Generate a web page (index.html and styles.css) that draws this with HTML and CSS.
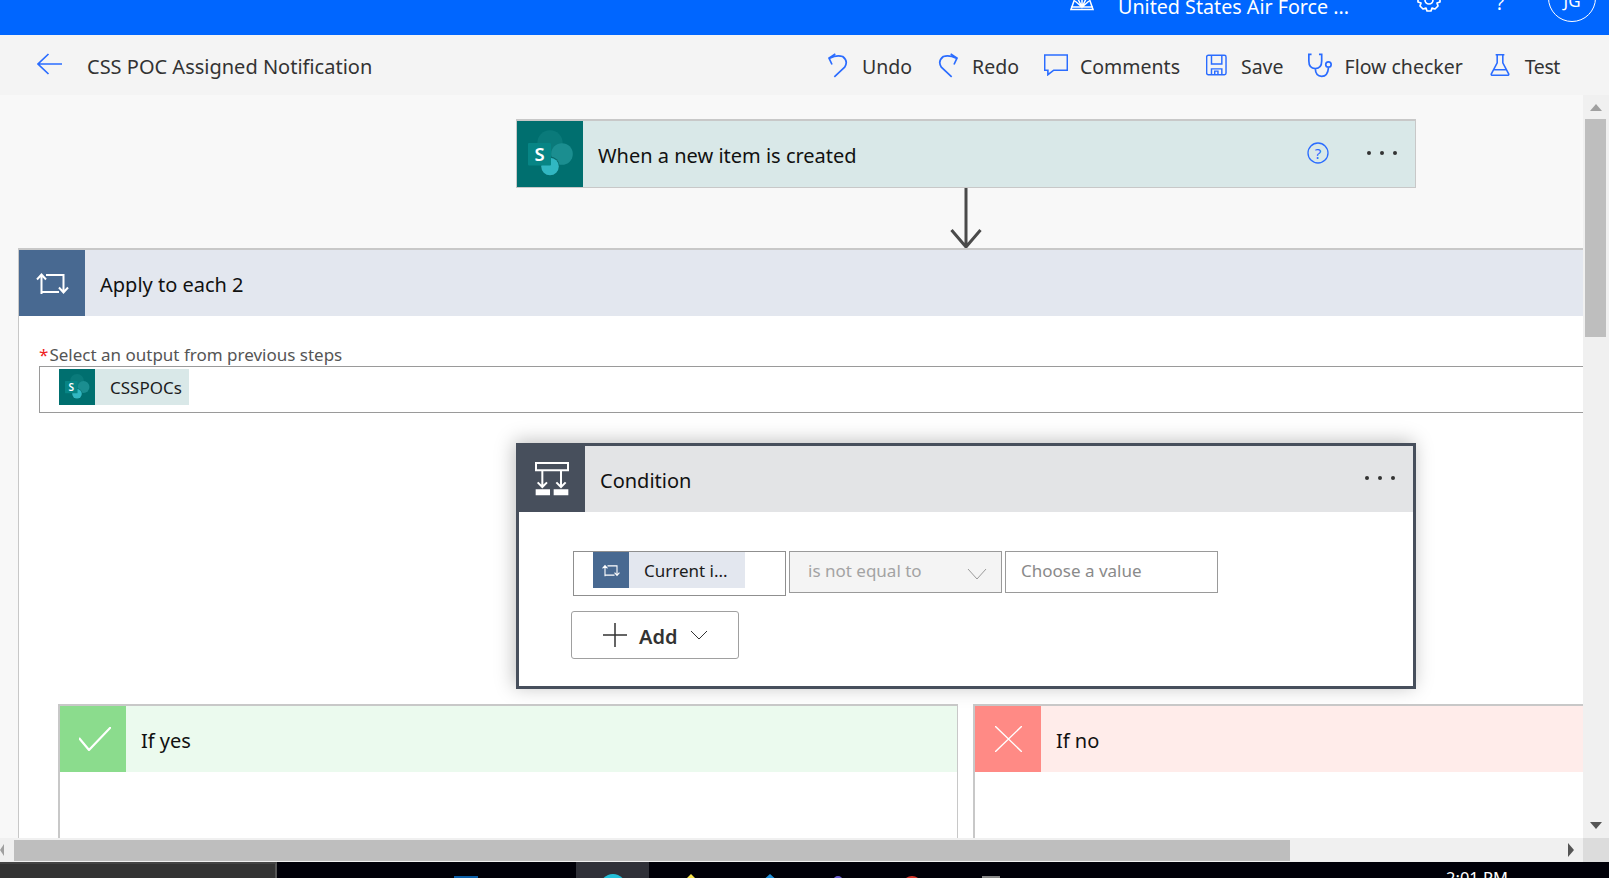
FILE: index.html
```html
<!DOCTYPE html>
<html lang="en">
<head>
<meta charset="utf-8">
<title>CSS POC Assigned Notification</title>
<link rel="stylesheet" href="styles.css">
</head>
<body>
<svg class="defs" width="0" height="0" aria-hidden="true">
  <symbol id="sp" viewBox="0 0 66 66">
    <circle cx="33" cy="22" r="12.700" fill="#0a7a7a"/>
    <circle cx="45" cy="33" r="10.800" fill="#1b8e90"/>
    <circle cx="33" cy="45" r="9.500" fill="#0a6a6a"/>
    <circle cx="33" cy="45.500" r="8.800" fill="#31b7c2"/>
    <rect x="11" y="22" width="23" height="22.500" rx="1" fill="#078585"/>
    <text x="22.500" y="39.700" text-anchor="middle" class="sp-s">S</text>
  </symbol>
  <symbol id="loop" viewBox="0 0 33 21">
    <path d="M5.500 21V1.500M1 6.500l4.500-5 4.500 5M10 2h17.500v17.500M23 14.500l4.500 5 4.500-5M5.500 19H23" fill="none" stroke="#fff" stroke-width="2"/>
  </symbol>
</svg>

<header class="topbar">
  <svg class="env-icon" viewBox="0 0 24 22" width="24" height="22"><path d="M5 9L1 20.500h22L19 9M1 18h22M5 12l7 6 7-6M12 10v8M8 10l4 8 4-8" fill="none" stroke="#fff" stroke-width="1.500"/></svg>
  <span class="env-name">United States Air Force ...</span>
  <svg class="gear" viewBox="0 0 24 24" width="24" height="24"><path d="M10 1h4l1 3 3-1 3 3-1 3 3 1v4l-3 1 1 3-3 3-3-1-1 3h-4l-1-3-3 1-3-3 1-3-3-1v-4l3-1-1-3 3-3 3 1z" fill="none" stroke="#fff" stroke-width="1.700" stroke-linejoin="round"/><circle cx="12" cy="12" r="4" fill="none" stroke="#fff" stroke-width="1.700"/></svg>
  <span class="help">?</span>
  <span class="avatar">JG</span>
</header>

<nav class="toolbar">
  <svg class="back" viewBox="0 0 25 22" width="25" height="22"><path d="M11.500 1L1 11l10.500 10M1 11h24" fill="none" stroke="#2a6cff" stroke-width="1.700"/></svg>
  <span class="flow-title">CSS POC Assigned Notification</span>
  <div class="actions">
    <button class="action undo"><svg viewBox="28 36 60 74" width="20" height="25"><path d="M47 107L78 78Q90 60 72 46 55 40 33 51M50 38L31 51l9 19" fill="none" stroke="#2a6cff" stroke-width="5"/></svg>Undo</button>
    <button class="action redo"><svg class="flip" viewBox="28 36 60 74" width="20" height="25"><path d="M47 107L78 78Q90 60 72 46 55 40 33 51M50 38L31 51l9 19" fill="none" stroke="#2a6cff" stroke-width="5"/></svg>Redo</button>
    <button class="action comments"><svg viewBox="678 43 74 66" width="24" height="22"><path d="M680 45h70v47h-42l-18 14V92h-10z" fill="none" stroke="#2a6cff" stroke-width="5"/></svg>Comments</button>
    <button class="action save"><svg viewBox="23 42 65 66" width="21" height="22"><path d="M30 45h50q5 0 5 5v50q0 5-5 5H30q-5 0-5-5V50q0-5 5-5zM40 45v27h32V45M40 105V87h32v18M50 105V94h10v11" fill="none" stroke="#2a6cff" stroke-width="4.500"/></svg>Save</button>
    <button class="action checker"><svg viewBox="325 38 76 74" width="26" height="25"><path d="M338 42h-8v20q0 22 19 22t19-22V42h-8M349 84q1 23 19 23t20-25" fill="none" stroke="#2a6cff" stroke-width="5"/><circle cx="388" cy="72" r="8" fill="none" stroke="#2a6cff" stroke-width="5"/></svg>Flow checker</button>
    <button class="action test"><svg viewBox="870 38 64 74" width="20" height="24"><path d="M888 42h28M893 42v26l-19 36q-1 4 4 4h48q5 0 4-4l-19-36V42M882 90h40" fill="none" stroke="#2a6cff" stroke-width="5"/></svg>Test</button>
  </div>
</nav>

<div class="workspace">
  <main class="canvas">
    <section class="card trigger">
      <div class="card-head trigger-head">
        <div class="card-icon sp-bg"><svg width="66" height="66"><use href="#sp"/></svg></div>
        <span class="card-title">When a new item is created</span>
        <svg class="info" viewBox="0 0 22 22" width="22" height="22"><circle cx="11" cy="11" r="10" fill="none" stroke="#2a6cff" stroke-width="1.300"/><text x="11" y="16.500" text-anchor="middle" class="info-q">?</text></svg>
        <span class="dots"><i></i><i></i><i></i></span>
      </div>
    </section>

    <div class="connector">
      <svg viewBox="0 0 32 60" width="32" height="60"><path d="M16 0v58M1.500 42L16 59 30.500 42" fill="none" stroke="#4a4a4a" stroke-width="3"/></svg>
    </div>

    <section class="loop">
      <div class="card-head loop-head">
        <div class="card-icon loop-bg"><svg width="33" height="21"><use href="#loop"/></svg></div>
        <span class="card-title">Apply to each 2</span>
      </div>
      <div class="loop-body">
        <label class="field-label"><span class="req">*</span>Select an output from previous steps</label>
        <div class="output-input">
          <span class="token sp-token"><span class="token-icon sp-bg"><svg width="36" height="36"><use href="#sp"/></svg></span><span class="token-text">CSSPOCs</span></span>
        </div>

        <section class="card condition">
          <div class="card-head condition-head">
            <div class="card-icon cond-bg"><svg viewBox="60 66 102 102" width="34" height="34"><path d="M63 69h96v22H63zM82 91v50M68 127l14 14 14-14M138 91v50M124 127l14 14 14-14" fill="none" stroke="#fff" stroke-width="6"/><path d="M62 148h43v18H62zM116 148h44v18h-44z" fill="#fff"/></svg></div>
            <span class="card-title">Condition</span>
            <span class="dots"><i></i><i></i><i></i></span>
          </div>
          <div class="condition-body">
            <div class="cond-row">
              <div class="cond-field cond-left">
                <span class="token loop-token"><span class="token-icon loop-bg"><svg width="18" height="13"><use href="#loop"/></svg></span><span class="token-text">Current i...</span></span>
              </div>
              <div class="cond-field cond-op"><span>is not equal to</span><svg viewBox="0 0 20 12" width="20" height="12"><path d="M1 1l9 10 9-10" fill="none" stroke="#9a9a9a" stroke-width="1"/></svg></div>
              <div class="cond-field cond-val">Choose a value</div>
            </div>
            <button class="add-btn"><svg viewBox="0 0 24 24" width="24" height="24"><path d="M12 0v24M0 12h24" stroke="#333" stroke-width="1.500"/></svg><span>Add</span><svg viewBox="0 0 18 10" width="18" height="10"><path d="M1 1l8 8 8-8" fill="none" stroke="#333" stroke-width="1"/></svg></button>
          </div>
        </section>

        <div class="branches">
          <section class="branch">
            <div class="card-head yes-head">
              <div class="card-icon yes-bg"><svg class="check" viewBox="0 0 32 24" width="32" height="24"><path d="M0 11l10 12L32 0" fill="none" stroke="#fff" stroke-width="2.200"/></svg></div>
              <span class="card-title">If yes</span>
            </div>
          </section>
          <section class="branch">
            <div class="card-head no-head">
              <div class="card-icon no-bg"><svg viewBox="0 0 27 26" width="27" height="26"><path d="M0 0l27 26M27 0L0 26" fill="none" stroke="#fff" stroke-width="1.400"/></svg></div>
              <span class="card-title">If no</span>
            </div>
          </section>
        </div>
      </div>
    </section>
  </main>
  <aside class="vscroll">
    <i class="arrow up"></i>
    <div class="vthumb"></div>
    <i class="arrow down"></i>
  </aside>
</div>

<div class="hscroll">
  <i class="arrow left"></i>
  <div class="hthumb"></div>
  <i class="arrow right"></i>
  <div class="corner"></div>
</div>

<footer class="taskbar">
  <div class="task-search"></div>
  <div class="tray">
    <i class="ti-blue"></i>
    <span class="ti-active"><i class="ti-edge"></i></span>
    <i class="ti-yellow"></i>
    <i class="ti-sky"></i>
    <i class="ti-purple"></i>
    <i class="ti-red"></i>
    <i class="ti-flag"></i>
  </div>
  <span class="clock">2:01 PM</span>
</footer>
</body>
</html>
```

FILE: styles.css
```css
* { box-sizing: border-box; }
html, body { margin: 0; padding: 0; }
body {
  width: 1609px;
  height: 878px;
  overflow: hidden;
  display: flex;
  flex-direction: column;
  font-family: "Noto Sans", "Open Sans", sans-serif;
  color: #1c1c1c;
  background: #f8f8f8;
}
.defs { position: absolute; }
.sp-s { font: 600 18.500px "Noto Sans", sans-serif; fill: #fff; }
.info-q { font: 400 15px "Noto Sans", sans-serif; fill: #2a6cff; }

/* top bar */
.topbar {
  flex: 0 0 35px;
  background: #0066ff;
  color: #fff;
  overflow: hidden;
  display: flex;
  align-items: flex-start;
  padding-left: 1070px;
}
.env-icon { margin-top: -11px; flex: none; }
.env-name { margin-left: 24px; width: 270px; font-size: 19.700px; line-height: 26px; margin-top: -6px; white-space: nowrap; }
.gear { margin-left: 29px; margin-top: -12px; flex: none; }
.help { margin-left: 55px; font-size: 19px; line-height: 24px; margin-top: -9px; width: 20px; }
.avatar {
  margin-left: 32px;
  margin-top: -26px;
  width: 48px;
  height: 48px;
  flex: none;
  border: 1px solid #fff;
  border-radius: 50%;
  display: flex;
  align-items: center;
  justify-content: center;
  font-size: 17px;
  padding-top: 4px;
}

/* toolbar */
.toolbar {
  flex: 0 0 60px;
  background: #f4f4f4;
  display: flex;
  align-items: center;
  padding-left: 37px;
  color: #333;
}
.back { flex: none; margin-top: -2px; }
.flow-title { margin-left: 25px; font-size: 20px; white-space: nowrap; padding-top: 2px; }
.actions { display: flex; margin-left: auto; align-items: center; padding-right: 49px; gap: 26px; }
.action {
  display: flex;
  align-items: center;
  gap: 14px;
  background: none;
  border: 0;
  padding: 4px 0 0;
  font: inherit;
  font-size: 19.500px;
  line-height: 30px;
  color: #333;
  white-space: nowrap;
}
.action svg { margin-top: -4px; }
.comments { gap: 12px; margin-left: -1px; }
.save { gap: 14px; }
.checker { gap: 12px; margin-left: -3px; }
.test { letter-spacing: -.4px; gap: 15px; margin-left: 1px; }
.flip { transform: scaleX(-1); }

/* workspace */
.workspace { flex: 0 0 743px; display: flex; min-height: 0; }
.canvas { flex: 1; min-width: 0; overflow: hidden; background: #f8f8f8; padding-top: 24px; }
.card-head { display: flex; align-items: center; height: 66px; }
.card-icon { width: 66px; height: 66px; flex: none; display: flex; align-items: center; justify-content: center; }
.card-title { margin-left: 15px; font-size: 20px; color: #111; white-space: nowrap; padding-top: 2px; }
.sp-bg { background: #006f6f; }
.loop-bg { background: #486991; }
.cond-bg { background: #474f5c; }
.yes-bg { background: #8bdc8d; }
.no-bg { background: #ff8a85; }
.check { margin-left: 4px; }

.card { margin-left: 516px; width: 900px; }
.trigger { border: 1px solid #c8c8c8; border-top-width: 2px; }
.trigger-head { background: #d9e8e8; }
.info { flex: none; margin: -3px 0 0 auto; }
.dots { display: flex; gap: 9px; padding: 0 18px 0 38px; margin-top: -3px; }
.dots i { width: 4px; height: 4px; border-radius: 50%; background: #333; }

.connector { height: 60px; margin-left: 950px; display: flex; }

.loop { margin-left: 18px; border-top: 2px solid #c8c8c8; border-left: 1px solid #c8c8c8; background: #fff; height: 600px; }
.loop-head { background: #e3e7ef; }
.loop-body { padding: 27px 0 0 20px; }
.field-label { display: block; font-size: 17px; line-height: 23px; color: #555; white-space: nowrap; height: 23px; }
.req { color: #e22; margin-right: 1px; }
.output-input { height: 47px; border: 1px solid #9a9a9a; border-right: 0; padding: 2px 0 0 19px; }
.token { display: inline-flex; align-items: center; height: 36px; }
.token-icon { width: 36px; height: 36px; flex: none; display: flex; align-items: center; justify-content: center; }
.token-text { font-size: 17px; color: #1c1c1c; white-space: nowrap; }
.sp-token { width: 130px; background: #d9e8e8; vertical-align: top; }
.sp-token .token-text { margin-left: 15px; }
.loop-token { width: 152px; background: #e3e7ef; }
.loop-token .token-text { margin-left: 15px; }

.condition {
  margin: 30px 0 0 477px;
  border: 3px solid #474f5c;
  background: #fff;
  box-shadow: -2px -2px 18px rgba(0, 0, 0, .25);
  height: 246px;
}
.condition-head { background: #e3e4e6; }
.condition .dots { margin-left: auto; }
.condition-body { padding: 39px 0 0 52px; }
.cond-row { display: flex; align-items: flex-start; gap: 3px; margin-left: 2px; }
.cond-field { width: 213px; border: 1px solid #9a9a9a; font-size: 17px; display: flex; align-items: center; height: 42px; }
.cond-left { height: 45px; padding: 0 0 0 19px; align-items: flex-start; border-color: #8f8f8f; }
.cond-op { background: #f4f4f4; color: #a3a3a3; padding: 0 14px 0 18px; justify-content: space-between; }
.cond-op span { margin-top: -3px; }
.cond-op svg { margin-top: 3px; }
.cond-val { color: #8a8a8a; padding: 0 0 3px 15px; }
.add-btn {
  margin-top: 15px;
  width: 168px;
  height: 48px;
  display: flex;
  align-items: center;
  background: #fff;
  border: 1px solid #a0a0a0;
  border-radius: 3px;
  padding: 0 0 0 31px;
  font: inherit;
  font-size: 20px;
  font-weight: 600;
  color: #333;
}
.add-btn span { margin: 0 13px 0 12px; padding-top: 2px; }

.branches { display: flex; gap: 15px; margin: 15px 0 0 19px; }
.branch { flex: 0 0 900px; height: 300px; border: 1px solid #c8c8c8; border-width: 2px 1px 0 2px; background: #fff; }
.yes-head { background: #ebfaee; }
.no-head { background: #ffecea; }

/* scrollbars */
.vscroll { flex: 0 0 26px; background: #f0f0f0; display: flex; flex-direction: column; align-items: center; }
.vthumb { width: 21px; height: 218px; background: #bebebe; margin: 8px 2px 0 0; }
.arrow { display: block; width: 0; height: 0; border-style: solid; flex: none; }
.arrow.up { margin-top: 9px; border-width: 0 6px 7px 6px; border-color: transparent transparent #a0a0a0 transparent; }
.arrow.down { margin-top: auto; margin-bottom: 9px; border-width: 7px 6px 0 6px; border-color: #555 transparent transparent transparent; }
.hscroll { flex: 0 0 24px; background: #f0f0f0; display: flex; align-items: center; }
.hscroll .arrow.left { border-width: 6px 4px 6px 0; border-color: transparent #a0a0a0 transparent transparent; }
.hthumb { margin-left: 10px; width: 1276px; height: 21px; margin-top: 1px; background: #bebebe; }
.hscroll .arrow.right { margin-left: 278px; border-width: 7px 0 7px 6px; border-color: transparent transparent transparent #555; }
.corner { margin-left: auto; width: 26px; height: 100%; background: #dcdcdc; }

/* taskbar */
.taskbar { flex: 0 0 16px; background: #000008; display: flex; overflow: hidden; }
.task-search { width: 277px; background: #333; border-top: 2px solid #444; border-right: 2px solid #555; }
.tray { display: flex; }
.ti-blue { margin: 14px 0 0 177px; width: 24px; height: 4px; background: #0a5ea8; }
.ti-active { margin-left: 98px; width: 73px; background: #2f3038; display: flex; justify-content: center; }
.ti-edge { margin-top: 12px; width: 26px; height: 26px; border-radius: 50%; background: #22bfd8; }
.ti-yellow { margin: 12px 0 0 36px; width: 0; height: 0; border: 6px solid transparent; border-bottom: 6px solid #f6e14a; border-top: 0; }
.ti-sky { margin: 12px 0 0 64px; width: 0; height: 0; border: 9px solid transparent; border-bottom: 8px solid #1f8fd8; border-top: 0; }
.ti-purple { margin: 14px 0 0 54px; width: 10px; height: 10px; border-radius: 50%; background: #6a5fd0; }
.ti-red { margin: 14px 0 0 59px; width: 20px; height: 20px; border-radius: 50%; background: #d8342a; }
.ti-flag { margin: 14px 0 0 60px; width: 18px; height: 4px; background: #888; }
.clock { margin-left: auto; margin-right: 101px; color: #fff; font-size: 16.500px; line-height: 20px; margin-top: 6px; height: 20px; white-space: nowrap; }
```
